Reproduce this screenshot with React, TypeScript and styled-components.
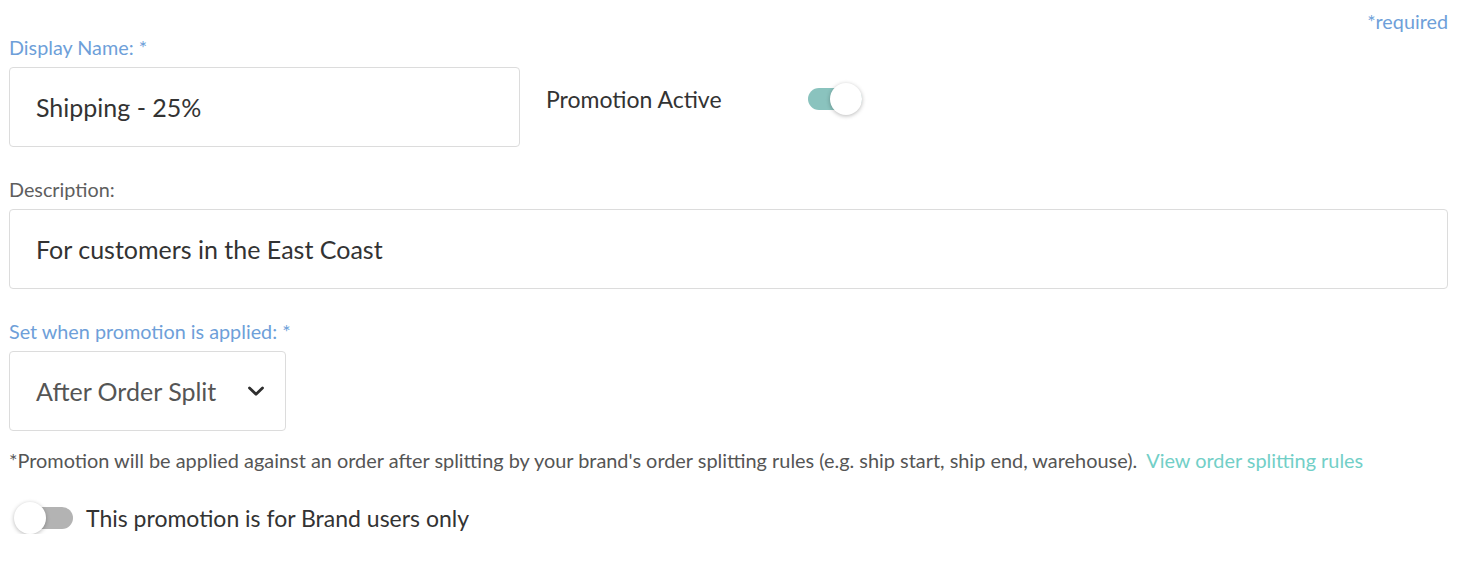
import React, { useState } from "react";
import styled, { createGlobalStyle } from "styled-components";

const colors = {
  blue: "#6e9fd9",
  label: "#5e5e5e",
  text: "#333333",
  muted: "#555555",
  border: "#dcdcdc",
  teal: "#72cfc7",
  trackOn: "#8ac3be",
  trackOff: "#b3b3b3",
};

const GlobalStyle = createGlobalStyle`
  body {
    margin: 0;
    background: #fff;
    font-family: Lato, "Open Sans", "Liberation Sans", sans-serif;
    color: ${colors.text};
  }
`;

const Form = styled.div`
  display: flex;
  flex-direction: column;
  padding: 9px 18px 0 9px;
`;

const Required = styled.div`
  align-self: flex-end;
  font-size: 19.8px;
  line-height: 24px;
  color: ${colors.blue};
`;

const Label = styled.div<{ required?: boolean }>`
  font-size: 19.8px;
  line-height: 24px;
  color: ${({ required }) => (required ? colors.blue : colors.label)};
  margin-bottom: 8px;
`;

const Field = styled.div<{ first?: boolean }>`
  display: flex;
  flex-direction: column;
  margin-top: ${({ first }) => (first ? "2px" : "30px")};
`;

const Row = styled.div`
  display: flex;
  align-items: flex-start;
  gap: 26px;
`;

const TextBox = styled.div<{ width?: string }>`
  box-sizing: border-box;
  width: ${({ width }) => width || "100%"};
  height: 80px;
  border: 1px solid ${colors.border};
  border-radius: 4px;
  display: flex;
  align-items: center;
  padding: 0 26px;
  font-size: 25px;
  color: ${colors.text};
`;

const SelectBox = styled(TextBox)`
  justify-content: space-between;
  padding-right: 20px;
  color: ${colors.muted};
  cursor: pointer;
`;

const ActiveGroup = styled.div`
  display: flex;
  align-items: center;
  gap: 86px;
  margin-top: 18px;
`;

const ActiveLabel = styled.span`
  font-size: 23px;
  line-height: 28px;
  color: ${colors.text};
`;

const SwitchTrack = styled.button<{ on: boolean }>`
  position: relative;
  width: 54px;
  height: 22px;
  padding: 0;
  border: none;
  border-radius: 11px;
  background: ${({ on }) => (on ? colors.trackOn : colors.trackOff)};
  cursor: pointer;
  flex-shrink: 0;
`;

const SwitchThumb = styled.span<{ on: boolean }>`
  position: absolute;
  top: -5px;
  left: ${({ on }) => (on ? "22px" : "-5px")};
  width: 32px;
  height: 32px;
  border-radius: 50%;
  background: #fff;
  box-shadow: 0 1px 4px rgba(0, 0, 0, 0.28);
`;

const Note = styled.p`
  margin: 17px 0 0;
  font-size: 19.9px;
  line-height: 24px;
  color: ${colors.muted};
`;

const NoteLink = styled.a`
  color: ${colors.teal};
  text-decoration: none;
  margin-left: 9px;
  cursor: pointer;
`;

const BrandRow = styled.div`
  display: flex;
  align-items: center;
  gap: 13px;
  height: 32px;
  margin-top: 30px;
  padding-left: 10px;
`;

const BrandText = styled.span`
  font-size: 23px;
  line-height: 28px;
  color: ${colors.text};
`;

const Chevron = () => (
  <svg width="18" height="12" viewBox="0 0 18 12" fill="none">
    <path d="M2.5 3 L9 9.2 L15.5 3" stroke="#2e2e2e" strokeWidth="2.8" strokeLinecap="round" strokeLinejoin="round" />
  </svg>
);

const Switch: React.FC<{ on: boolean; onToggle: () => void }> = ({ on, onToggle }) => (
  <SwitchTrack on={on} onClick={onToggle}>
    <SwitchThumb on={on} />
  </SwitchTrack>
);

export default function App() {
  const [active, setActive] = useState(true);
  const [brandOnly, setBrandOnly] = useState(false);

  return (
    <>
      <GlobalStyle />
      <Form>
        <Required>*required</Required>

        <Field first>
          <Label required>Display Name: *</Label>
          <Row>
            <TextBox width="511px">Shipping - 25%</TextBox>
            <ActiveGroup>
              <ActiveLabel>Promotion Active</ActiveLabel>
              <Switch on={active} onToggle={() => setActive(!active)} />
            </ActiveGroup>
          </Row>
        </Field>

        <Field>
          <Label>Description:</Label>
          <TextBox>For customers in the East Coast</TextBox>
        </Field>

        <Field>
          <Label required>Set when promotion is applied: *</Label>
          <SelectBox width="277px">
            After Order Split
            <Chevron />
          </SelectBox>
        </Field>

        <Note>
          *Promotion will be applied against an order after splitting by your brand's order splitting rules (e.g. ship
          start, ship end, warehouse).
          <NoteLink>View order splitting rules</NoteLink>
        </Note>

        <BrandRow>
          <Switch on={brandOnly} onToggle={() => setBrandOnly(!brandOnly)} />
          <BrandText>This promotion is for Brand users only</BrandText>
        </BrandRow>
      </Form>
    </>
  );
}
